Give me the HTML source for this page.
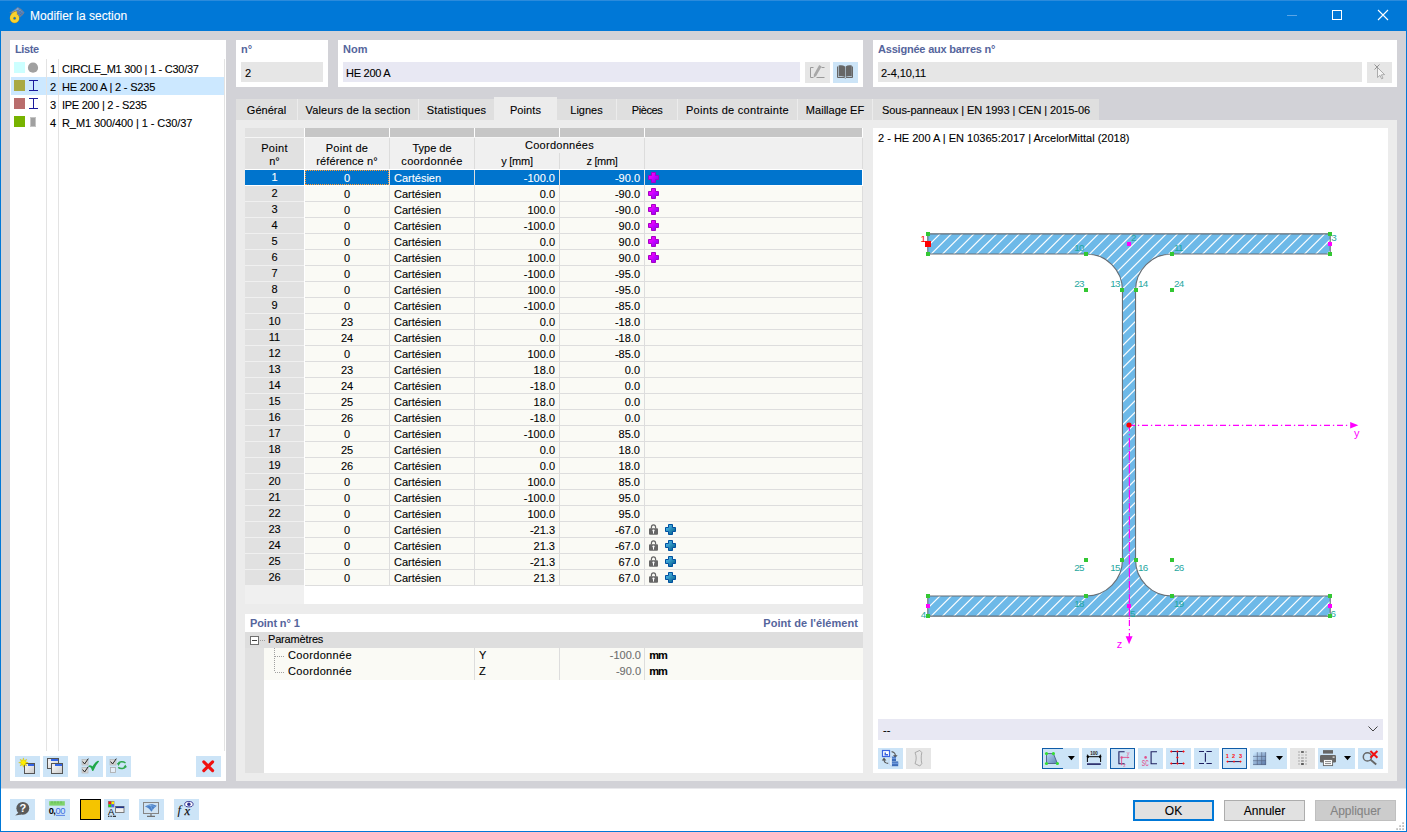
<!DOCTYPE html>
<html lang="fr"><head><meta charset="utf-8"><title>Modifier la section</title>
<style>
html,body{margin:0;padding:0;}
body{width:1407px;height:832px;overflow:hidden;position:relative;background:#D2D2D7;font-family:"Liberation Sans", sans-serif;font-size:11px;color:#000;}
.b{position:absolute;box-sizing:border-box;}
.t{position:absolute;white-space:pre;-webkit-text-stroke:0.1px currentColor;}
svg{position:absolute;overflow:visible;}
.lbl{color:#55659C;font-weight:700;-webkit-text-stroke:0;}
</style></head><body>
<div class="b " style="left:0px;top:0px;width:1407px;height:31px;background:#0078D7;"></div>
<div class="b " style="left:0px;top:0px;width:1407px;height:1px;background:#2B8BDC;"></div>
<div class="b " style="left:0px;top:31px;width:1px;height:801px;background:#0078D7;"></div>
<div class="b " style="left:1406px;top:31px;width:1px;height:801px;background:#0078D7;"></div>
<div class="b " style="left:0px;top:831px;width:1407px;height:1px;background:#0078D7;"></div>
<div class="b " style="left:1px;top:788px;width:1405px;height:43px;background:#FFFFFF;"></div>
<div class="b " style="left:1px;top:788px;width:1405px;height:1px;background:#E9E9EC;"></div>
<div class="t " style="top:7.5px;height:16px;line-height:16px;left:30px;font-size:12px;color:#fff;letter-spacing:0.025px;">Modifier la section</div>
<div class="b " style="left:10px;top:40px;width:216px;height:741px;background:#fff;"></div>
<div class="t lbl" style="top:41px;height:16px;line-height:16px;left:15px;font-weight:700;letter-spacing:-0.398px;">Liste</div>
<div class="b " style="left:11px;top:77px;width:213px;height:18px;background:#CCE8FF;"></div>
<div class="b " style="left:46px;top:59px;width:1px;height:692px;background:#E3E3E3;"></div>
<div class="b " style="left:58px;top:59px;width:1px;height:692px;background:#E3E3E3;"></div>
<div class="b " style="left:224px;top:59px;width:1px;height:692px;background:#E3E3E3;"></div>
<div class="b " style="left:14px;top:62px;width:11px;height:11px;background:#CCFFFF;"></div>
<div class="t " style="top:60.5px;height:16px;line-height:16px;left:50px;">1</div>
<div class="t " style="top:60.5px;height:16px;line-height:16px;left:62px;letter-spacing:-0.261px;">CIRCLE_M1 300 | 1 - C30/37</div>
<div class="b " style="left:14px;top:80px;width:11px;height:11px;background:#A9A944;"></div>
<div class="t " style="top:78.5px;height:16px;line-height:16px;left:50px;">2</div>
<div class="t " style="top:78.5px;height:16px;line-height:16px;left:62px;letter-spacing:-0.170px;">HE 200 A | 2 - S235</div>
<div class="b " style="left:14px;top:98px;width:11px;height:11px;background:#B96D6D;"></div>
<div class="t " style="top:96.5px;height:16px;line-height:16px;left:50px;">3</div>
<div class="t " style="top:96.5px;height:16px;line-height:16px;left:62px;letter-spacing:-0.284px;">IPE 200 | 2 - S235</div>
<div class="b " style="left:14px;top:116px;width:11px;height:11px;background:#77B300;"></div>
<div class="t " style="top:114.5px;height:16px;line-height:16px;left:50px;">4</div>
<div class="t " style="top:114.5px;height:16px;line-height:16px;left:62px;letter-spacing:-0.088px;">R_M1 300/400 | 1 - C30/37</div>
<div class="b " style="left:15px;top:756px;width:25px;height:21px;background:#CCE4F7;"></div>
<div class="b " style="left:43px;top:756px;width:25px;height:21px;background:#CCE4F7;"></div>
<div class="b " style="left:78px;top:756px;width:25px;height:21px;background:#CCE4F7;"></div>
<div class="b " style="left:106px;top:756px;width:25px;height:21px;background:#CCE4F7;"></div>
<div class="b " style="left:196px;top:756px;width:25px;height:21px;background:#CCE4F7;"></div>
<div class="b " style="left:236px;top:40px;width:92px;height:47px;background:#fff;"></div>
<div class="t lbl" style="top:41px;height:16px;line-height:16px;left:241px;font-weight:700;">n°</div>
<div class="b " style="left:241px;top:62px;width:82px;height:20px;background:#E6E6E6;"></div>
<div class="t " style="top:65px;height:16px;line-height:16px;left:245px;">2</div>
<div class="b " style="left:338px;top:40px;width:525px;height:47px;background:#fff;"></div>
<div class="t lbl" style="top:41px;height:16px;line-height:16px;left:343px;font-weight:700;">Nom</div>
<div class="b " style="left:343px;top:62px;width:457px;height:20px;background:#E8E8F3;"></div>
<div class="t " style="top:65px;height:16px;line-height:16px;left:346px;letter-spacing:-0.261px;">HE 200 A</div>
<div class="b " style="left:805px;top:62px;width:25px;height:21px;background:#E6E6E6;"></div>
<div class="b " style="left:833px;top:62px;width:25px;height:21px;background:#CCE4F7;"></div>
<div class="b " style="left:873px;top:40px;width:524px;height:47px;background:#fff;"></div>
<div class="t lbl" style="top:41px;height:16px;line-height:16px;left:878px;font-weight:700;letter-spacing:-0.204px;">Assignée aux barres n°</div>
<div class="b " style="left:878px;top:62px;width:484px;height:20px;background:#E6E6E6;"></div>
<div class="t " style="top:65px;height:16px;line-height:16px;left:881px;letter-spacing:-0.075px;">2-4,10,11</div>
<div class="b " style="left:1367px;top:62px;width:25px;height:21px;background:#E6E6E6;"></div>
<div class="b " style="left:236px;top:99px;width:863px;height:21px;background:#ECECEC;"></div>
<div class="b " style="left:236px;top:99px;width:61px;height:21px;background:#DFDFDF;"></div>
<div class="t " style="top:102px;height:16px;line-height:16px;left:116.5px;width:300px;text-align:center;letter-spacing:0.023px;">Général</div>
<div class="b " style="left:298px;top:99px;width:120px;height:21px;background:#DFDFDF;"></div>
<div class="t " style="top:102px;height:16px;line-height:16px;left:208.0px;width:300px;text-align:center;letter-spacing:0.176px;">Valeurs de la section</div>
<div class="b " style="left:419px;top:99px;width:75px;height:21px;background:#DFDFDF;"></div>
<div class="t " style="top:102px;height:16px;line-height:16px;left:306.5px;width:300px;text-align:center;letter-spacing:0.219px;">Statistiques</div>
<div class="b " style="left:494px;top:97px;width:63px;height:23px;background:#ECECEC;"></div>
<div class="t " style="top:102px;height:16px;line-height:16px;left:375.5px;width:300px;text-align:center;letter-spacing:0.112px;">Points</div>
<div class="b " style="left:557px;top:99px;width:59px;height:21px;background:#DFDFDF;"></div>
<div class="t " style="top:102px;height:16px;line-height:16px;left:436.5px;width:300px;text-align:center;">Lignes</div>
<div class="b " style="left:617px;top:99px;width:60px;height:21px;background:#DFDFDF;"></div>
<div class="t " style="top:102px;height:16px;line-height:16px;left:497.0px;width:300px;text-align:center;letter-spacing:-0.422px;">Pièces</div>
<div class="b " style="left:678px;top:99px;width:119px;height:21px;background:#DFDFDF;"></div>
<div class="t " style="top:102px;height:16px;line-height:16px;left:587.5px;width:300px;text-align:center;letter-spacing:0.288px;">Points de contrainte</div>
<div class="b " style="left:798px;top:99px;width:74px;height:21px;background:#DFDFDF;"></div>
<div class="t " style="top:102px;height:16px;line-height:16px;left:685.0px;width:300px;text-align:center;letter-spacing:0.016px;">Maillage EF</div>
<div class="b " style="left:873px;top:99px;width:226px;height:21px;background:#DFDFDF;"></div>
<div class="t " style="top:102px;height:16px;line-height:16px;left:836.0px;width:300px;text-align:center;letter-spacing:-0.061px;">Sous-panneaux | EN 1993 | CEN | 2015-06</div>
<div class="b " style="left:236px;top:120px;width:1161px;height:661px;background:#ECECEC;"></div>
<div class="b " style="left:245px;top:128px;width:618px;height:476px;background:#fff;"></div>
<div class="b " style="left:245px;top:128px;width:59px;height:9px;background:#E1E1E1;"></div>
<div class="b " style="left:245px;top:137px;width:618px;height:1px;background:#F6F6F6;"></div>
<div class="b " style="left:305px;top:128px;width:84px;height:9px;background:#C6C6C6;"></div>
<div class="b " style="left:390px;top:128px;width:84px;height:9px;background:#C6C6C6;"></div>
<div class="b " style="left:475px;top:128px;width:84px;height:9px;background:#C6C6C6;"></div>
<div class="b " style="left:560px;top:128px;width:84px;height:9px;background:#C6C6C6;"></div>
<div class="b " style="left:645px;top:128px;width:217px;height:9px;background:#C6C6C6;"></div>
<div class="b " style="left:245px;top:138px;width:59px;height:31px;background:#E1E1E1;"></div>
<div class="b " style="left:305px;top:138px;width:557px;height:31px;background:#F0F0F0;"></div>
<div class="b " style="left:389px;top:138px;width:1px;height:31px;background:#DCDCDC;"></div>
<div class="b " style="left:474px;top:138px;width:1px;height:31px;background:#DCDCDC;"></div>
<div class="b " style="left:644px;top:138px;width:1px;height:31px;background:#DCDCDC;"></div>
<div class="b " style="left:862px;top:138px;width:1px;height:31px;background:#DCDCDC;"></div>
<div class="b " style="left:559px;top:153px;width:1px;height:16px;background:#DCDCDC;"></div>
<div class="t " style="top:140px;height:16px;line-height:16px;left:124.5px;width:300px;text-align:center;letter-spacing:0.304px;">Point</div>
<div class="t " style="top:153px;height:16px;line-height:16px;left:124.5px;width:300px;text-align:center;">n°</div>
<div class="t " style="top:140px;height:16px;line-height:16px;left:197px;width:300px;text-align:center;letter-spacing:0.266px;">Point de</div>
<div class="t " style="top:153px;height:16px;line-height:16px;left:197px;width:300px;text-align:center;letter-spacing:0.129px;">référence n°</div>
<div class="t " style="top:140px;height:16px;line-height:16px;left:282px;width:300px;text-align:center;">Type de</div>
<div class="t " style="top:153px;height:16px;line-height:16px;left:282px;width:300px;text-align:center;letter-spacing:0.319px;">coordonnée</div>
<div class="t " style="top:137px;height:16px;line-height:16px;left:409.5px;width:300px;text-align:center;letter-spacing:0.267px;">Coordonnées</div>
<div class="t " style="top:153px;height:16px;line-height:16px;left:367px;width:300px;text-align:center;letter-spacing:-0.208px;">y [mm]</div>
<div class="t " style="top:153px;height:16px;line-height:16px;left:452px;width:300px;text-align:center;letter-spacing:-0.333px;">z [mm]</div>
<div class="b " style="left:245px;top:170px;width:59px;height:15px;background:#0074CD;"></div>
<div class="b " style="left:305px;top:170px;width:84px;height:15px;background:#0074CD;outline:1px dotted #FF9A30;outline-offset:-1px;"></div>
<div class="b " style="left:390px;top:170px;width:84px;height:15px;background:#0074CD;"></div>
<div class="b " style="left:475px;top:170px;width:84px;height:15px;background:#0074CD;"></div>
<div class="b " style="left:560px;top:170px;width:84px;height:15px;background:#0074CD;"></div>
<div class="b " style="left:645px;top:170px;width:217px;height:15px;background:#0074CD;"></div>
<div class="b " style="left:389px;top:170px;width:1px;height:16px;background:#DDDDDD;"></div>
<div class="b " style="left:474px;top:170px;width:1px;height:16px;background:#DDDDDD;"></div>
<div class="b " style="left:559px;top:170px;width:1px;height:16px;background:#DDDDDD;"></div>
<div class="b " style="left:644px;top:170px;width:1px;height:16px;background:#DDDDDD;"></div>
<div class="t " style="top:168.9px;height:16px;line-height:16px;left:124.5px;width:300px;text-align:center;color:#fff;">1</div>
<div class="t " style="top:169.5px;height:16px;line-height:16px;left:197px;width:300px;text-align:center;color:#fff;">0</div>
<div class="t " style="top:169.5px;height:16px;line-height:16px;left:394px;color:#fff;">Cartésien</div>
<div class="t " style="top:169.5px;height:16px;line-height:16px;right:852px;color:#fff;">-100.0</div>
<div class="t " style="top:169.5px;height:16px;line-height:16px;right:767px;color:#fff;">-90.0</div>
<div class="b " style="left:245px;top:186px;width:59px;height:15px;background:#E1E1E1;"></div>
<div class="b " style="left:305px;top:186px;width:557px;height:15px;background:#FAFAF5;"></div>
<div class="b " style="left:245px;top:201px;width:59px;height:1px;background:#F0F0F0;"></div>
<div class="b " style="left:305px;top:201px;width:558px;height:1px;background:#DDDDDD;"></div>
<div class="b " style="left:389px;top:186px;width:1px;height:16px;background:#DDDDDD;"></div>
<div class="b " style="left:474px;top:186px;width:1px;height:16px;background:#DDDDDD;"></div>
<div class="b " style="left:559px;top:186px;width:1px;height:16px;background:#DDDDDD;"></div>
<div class="b " style="left:644px;top:186px;width:1px;height:16px;background:#DDDDDD;"></div>
<div class="b " style="left:862px;top:186px;width:1px;height:16px;background:#DDDDDD;"></div>
<div class="t " style="top:184.9px;height:16px;line-height:16px;left:124.5px;width:300px;text-align:center;">2</div>
<div class="t " style="top:185.5px;height:16px;line-height:16px;left:197px;width:300px;text-align:center;">0</div>
<div class="t " style="top:185.5px;height:16px;line-height:16px;left:394px;">Cartésien</div>
<div class="t " style="top:185.5px;height:16px;line-height:16px;right:852px;">0.0</div>
<div class="t " style="top:185.5px;height:16px;line-height:16px;right:767px;">-90.0</div>
<div class="b " style="left:245px;top:202px;width:59px;height:15px;background:#E1E1E1;"></div>
<div class="b " style="left:305px;top:202px;width:557px;height:15px;background:#FAFAF5;"></div>
<div class="b " style="left:245px;top:217px;width:59px;height:1px;background:#F0F0F0;"></div>
<div class="b " style="left:305px;top:217px;width:558px;height:1px;background:#DDDDDD;"></div>
<div class="b " style="left:389px;top:202px;width:1px;height:16px;background:#DDDDDD;"></div>
<div class="b " style="left:474px;top:202px;width:1px;height:16px;background:#DDDDDD;"></div>
<div class="b " style="left:559px;top:202px;width:1px;height:16px;background:#DDDDDD;"></div>
<div class="b " style="left:644px;top:202px;width:1px;height:16px;background:#DDDDDD;"></div>
<div class="b " style="left:862px;top:202px;width:1px;height:16px;background:#DDDDDD;"></div>
<div class="t " style="top:200.9px;height:16px;line-height:16px;left:124.5px;width:300px;text-align:center;">3</div>
<div class="t " style="top:201.5px;height:16px;line-height:16px;left:197px;width:300px;text-align:center;">0</div>
<div class="t " style="top:201.5px;height:16px;line-height:16px;left:394px;">Cartésien</div>
<div class="t " style="top:201.5px;height:16px;line-height:16px;right:852px;">100.0</div>
<div class="t " style="top:201.5px;height:16px;line-height:16px;right:767px;">-90.0</div>
<div class="b " style="left:245px;top:218px;width:59px;height:15px;background:#E1E1E1;"></div>
<div class="b " style="left:305px;top:218px;width:557px;height:15px;background:#FAFAF5;"></div>
<div class="b " style="left:245px;top:233px;width:59px;height:1px;background:#F0F0F0;"></div>
<div class="b " style="left:305px;top:233px;width:558px;height:1px;background:#DDDDDD;"></div>
<div class="b " style="left:389px;top:218px;width:1px;height:16px;background:#DDDDDD;"></div>
<div class="b " style="left:474px;top:218px;width:1px;height:16px;background:#DDDDDD;"></div>
<div class="b " style="left:559px;top:218px;width:1px;height:16px;background:#DDDDDD;"></div>
<div class="b " style="left:644px;top:218px;width:1px;height:16px;background:#DDDDDD;"></div>
<div class="b " style="left:862px;top:218px;width:1px;height:16px;background:#DDDDDD;"></div>
<div class="t " style="top:216.9px;height:16px;line-height:16px;left:124.5px;width:300px;text-align:center;">4</div>
<div class="t " style="top:217.5px;height:16px;line-height:16px;left:197px;width:300px;text-align:center;">0</div>
<div class="t " style="top:217.5px;height:16px;line-height:16px;left:394px;">Cartésien</div>
<div class="t " style="top:217.5px;height:16px;line-height:16px;right:852px;">-100.0</div>
<div class="t " style="top:217.5px;height:16px;line-height:16px;right:767px;">90.0</div>
<div class="b " style="left:245px;top:234px;width:59px;height:15px;background:#E1E1E1;"></div>
<div class="b " style="left:305px;top:234px;width:557px;height:15px;background:#FAFAF5;"></div>
<div class="b " style="left:245px;top:249px;width:59px;height:1px;background:#F0F0F0;"></div>
<div class="b " style="left:305px;top:249px;width:558px;height:1px;background:#DDDDDD;"></div>
<div class="b " style="left:389px;top:234px;width:1px;height:16px;background:#DDDDDD;"></div>
<div class="b " style="left:474px;top:234px;width:1px;height:16px;background:#DDDDDD;"></div>
<div class="b " style="left:559px;top:234px;width:1px;height:16px;background:#DDDDDD;"></div>
<div class="b " style="left:644px;top:234px;width:1px;height:16px;background:#DDDDDD;"></div>
<div class="b " style="left:862px;top:234px;width:1px;height:16px;background:#DDDDDD;"></div>
<div class="t " style="top:232.9px;height:16px;line-height:16px;left:124.5px;width:300px;text-align:center;">5</div>
<div class="t " style="top:233.5px;height:16px;line-height:16px;left:197px;width:300px;text-align:center;">0</div>
<div class="t " style="top:233.5px;height:16px;line-height:16px;left:394px;">Cartésien</div>
<div class="t " style="top:233.5px;height:16px;line-height:16px;right:852px;">0.0</div>
<div class="t " style="top:233.5px;height:16px;line-height:16px;right:767px;">90.0</div>
<div class="b " style="left:245px;top:250px;width:59px;height:15px;background:#E1E1E1;"></div>
<div class="b " style="left:305px;top:250px;width:557px;height:15px;background:#FAFAF5;"></div>
<div class="b " style="left:245px;top:265px;width:59px;height:1px;background:#F0F0F0;"></div>
<div class="b " style="left:305px;top:265px;width:558px;height:1px;background:#DDDDDD;"></div>
<div class="b " style="left:389px;top:250px;width:1px;height:16px;background:#DDDDDD;"></div>
<div class="b " style="left:474px;top:250px;width:1px;height:16px;background:#DDDDDD;"></div>
<div class="b " style="left:559px;top:250px;width:1px;height:16px;background:#DDDDDD;"></div>
<div class="b " style="left:644px;top:250px;width:1px;height:16px;background:#DDDDDD;"></div>
<div class="b " style="left:862px;top:250px;width:1px;height:16px;background:#DDDDDD;"></div>
<div class="t " style="top:248.89999999999998px;height:16px;line-height:16px;left:124.5px;width:300px;text-align:center;">6</div>
<div class="t " style="top:249.5px;height:16px;line-height:16px;left:197px;width:300px;text-align:center;">0</div>
<div class="t " style="top:249.5px;height:16px;line-height:16px;left:394px;">Cartésien</div>
<div class="t " style="top:249.5px;height:16px;line-height:16px;right:852px;">100.0</div>
<div class="t " style="top:249.5px;height:16px;line-height:16px;right:767px;">90.0</div>
<div class="b " style="left:245px;top:266px;width:59px;height:15px;background:#E1E1E1;"></div>
<div class="b " style="left:305px;top:266px;width:557px;height:15px;background:#FAFAF5;"></div>
<div class="b " style="left:245px;top:281px;width:59px;height:1px;background:#F0F0F0;"></div>
<div class="b " style="left:305px;top:281px;width:558px;height:1px;background:#DDDDDD;"></div>
<div class="b " style="left:389px;top:266px;width:1px;height:16px;background:#DDDDDD;"></div>
<div class="b " style="left:474px;top:266px;width:1px;height:16px;background:#DDDDDD;"></div>
<div class="b " style="left:559px;top:266px;width:1px;height:16px;background:#DDDDDD;"></div>
<div class="b " style="left:644px;top:266px;width:1px;height:16px;background:#DDDDDD;"></div>
<div class="b " style="left:862px;top:266px;width:1px;height:16px;background:#DDDDDD;"></div>
<div class="t " style="top:264.9px;height:16px;line-height:16px;left:124.5px;width:300px;text-align:center;">7</div>
<div class="t " style="top:265.5px;height:16px;line-height:16px;left:197px;width:300px;text-align:center;">0</div>
<div class="t " style="top:265.5px;height:16px;line-height:16px;left:394px;">Cartésien</div>
<div class="t " style="top:265.5px;height:16px;line-height:16px;right:852px;">-100.0</div>
<div class="t " style="top:265.5px;height:16px;line-height:16px;right:767px;">-95.0</div>
<div class="b " style="left:245px;top:282px;width:59px;height:15px;background:#E1E1E1;"></div>
<div class="b " style="left:305px;top:282px;width:557px;height:15px;background:#FAFAF5;"></div>
<div class="b " style="left:245px;top:297px;width:59px;height:1px;background:#F0F0F0;"></div>
<div class="b " style="left:305px;top:297px;width:558px;height:1px;background:#DDDDDD;"></div>
<div class="b " style="left:389px;top:282px;width:1px;height:16px;background:#DDDDDD;"></div>
<div class="b " style="left:474px;top:282px;width:1px;height:16px;background:#DDDDDD;"></div>
<div class="b " style="left:559px;top:282px;width:1px;height:16px;background:#DDDDDD;"></div>
<div class="b " style="left:644px;top:282px;width:1px;height:16px;background:#DDDDDD;"></div>
<div class="b " style="left:862px;top:282px;width:1px;height:16px;background:#DDDDDD;"></div>
<div class="t " style="top:280.9px;height:16px;line-height:16px;left:124.5px;width:300px;text-align:center;">8</div>
<div class="t " style="top:281.5px;height:16px;line-height:16px;left:197px;width:300px;text-align:center;">0</div>
<div class="t " style="top:281.5px;height:16px;line-height:16px;left:394px;">Cartésien</div>
<div class="t " style="top:281.5px;height:16px;line-height:16px;right:852px;">100.0</div>
<div class="t " style="top:281.5px;height:16px;line-height:16px;right:767px;">-95.0</div>
<div class="b " style="left:245px;top:298px;width:59px;height:15px;background:#E1E1E1;"></div>
<div class="b " style="left:305px;top:298px;width:557px;height:15px;background:#FAFAF5;"></div>
<div class="b " style="left:245px;top:313px;width:59px;height:1px;background:#F0F0F0;"></div>
<div class="b " style="left:305px;top:313px;width:558px;height:1px;background:#DDDDDD;"></div>
<div class="b " style="left:389px;top:298px;width:1px;height:16px;background:#DDDDDD;"></div>
<div class="b " style="left:474px;top:298px;width:1px;height:16px;background:#DDDDDD;"></div>
<div class="b " style="left:559px;top:298px;width:1px;height:16px;background:#DDDDDD;"></div>
<div class="b " style="left:644px;top:298px;width:1px;height:16px;background:#DDDDDD;"></div>
<div class="b " style="left:862px;top:298px;width:1px;height:16px;background:#DDDDDD;"></div>
<div class="t " style="top:296.9px;height:16px;line-height:16px;left:124.5px;width:300px;text-align:center;">9</div>
<div class="t " style="top:297.5px;height:16px;line-height:16px;left:197px;width:300px;text-align:center;">0</div>
<div class="t " style="top:297.5px;height:16px;line-height:16px;left:394px;">Cartésien</div>
<div class="t " style="top:297.5px;height:16px;line-height:16px;right:852px;">-100.0</div>
<div class="t " style="top:297.5px;height:16px;line-height:16px;right:767px;">-85.0</div>
<div class="b " style="left:245px;top:314px;width:59px;height:15px;background:#E1E1E1;"></div>
<div class="b " style="left:305px;top:314px;width:557px;height:15px;background:#FAFAF5;"></div>
<div class="b " style="left:245px;top:329px;width:59px;height:1px;background:#F0F0F0;"></div>
<div class="b " style="left:305px;top:329px;width:558px;height:1px;background:#DDDDDD;"></div>
<div class="b " style="left:389px;top:314px;width:1px;height:16px;background:#DDDDDD;"></div>
<div class="b " style="left:474px;top:314px;width:1px;height:16px;background:#DDDDDD;"></div>
<div class="b " style="left:559px;top:314px;width:1px;height:16px;background:#DDDDDD;"></div>
<div class="b " style="left:644px;top:314px;width:1px;height:16px;background:#DDDDDD;"></div>
<div class="b " style="left:862px;top:314px;width:1px;height:16px;background:#DDDDDD;"></div>
<div class="t " style="top:312.9px;height:16px;line-height:16px;left:124.5px;width:300px;text-align:center;">10</div>
<div class="t " style="top:313.5px;height:16px;line-height:16px;left:197px;width:300px;text-align:center;">23</div>
<div class="t " style="top:313.5px;height:16px;line-height:16px;left:394px;">Cartésien</div>
<div class="t " style="top:313.5px;height:16px;line-height:16px;right:852px;">0.0</div>
<div class="t " style="top:313.5px;height:16px;line-height:16px;right:767px;">-18.0</div>
<div class="b " style="left:245px;top:330px;width:59px;height:15px;background:#E1E1E1;"></div>
<div class="b " style="left:305px;top:330px;width:557px;height:15px;background:#FAFAF5;"></div>
<div class="b " style="left:245px;top:345px;width:59px;height:1px;background:#F0F0F0;"></div>
<div class="b " style="left:305px;top:345px;width:558px;height:1px;background:#DDDDDD;"></div>
<div class="b " style="left:389px;top:330px;width:1px;height:16px;background:#DDDDDD;"></div>
<div class="b " style="left:474px;top:330px;width:1px;height:16px;background:#DDDDDD;"></div>
<div class="b " style="left:559px;top:330px;width:1px;height:16px;background:#DDDDDD;"></div>
<div class="b " style="left:644px;top:330px;width:1px;height:16px;background:#DDDDDD;"></div>
<div class="b " style="left:862px;top:330px;width:1px;height:16px;background:#DDDDDD;"></div>
<div class="t " style="top:328.9px;height:16px;line-height:16px;left:124.5px;width:300px;text-align:center;">11</div>
<div class="t " style="top:329.5px;height:16px;line-height:16px;left:197px;width:300px;text-align:center;">24</div>
<div class="t " style="top:329.5px;height:16px;line-height:16px;left:394px;">Cartésien</div>
<div class="t " style="top:329.5px;height:16px;line-height:16px;right:852px;">0.0</div>
<div class="t " style="top:329.5px;height:16px;line-height:16px;right:767px;">-18.0</div>
<div class="b " style="left:245px;top:346px;width:59px;height:15px;background:#E1E1E1;"></div>
<div class="b " style="left:305px;top:346px;width:557px;height:15px;background:#FAFAF5;"></div>
<div class="b " style="left:245px;top:361px;width:59px;height:1px;background:#F0F0F0;"></div>
<div class="b " style="left:305px;top:361px;width:558px;height:1px;background:#DDDDDD;"></div>
<div class="b " style="left:389px;top:346px;width:1px;height:16px;background:#DDDDDD;"></div>
<div class="b " style="left:474px;top:346px;width:1px;height:16px;background:#DDDDDD;"></div>
<div class="b " style="left:559px;top:346px;width:1px;height:16px;background:#DDDDDD;"></div>
<div class="b " style="left:644px;top:346px;width:1px;height:16px;background:#DDDDDD;"></div>
<div class="b " style="left:862px;top:346px;width:1px;height:16px;background:#DDDDDD;"></div>
<div class="t " style="top:344.9px;height:16px;line-height:16px;left:124.5px;width:300px;text-align:center;">12</div>
<div class="t " style="top:345.5px;height:16px;line-height:16px;left:197px;width:300px;text-align:center;">0</div>
<div class="t " style="top:345.5px;height:16px;line-height:16px;left:394px;">Cartésien</div>
<div class="t " style="top:345.5px;height:16px;line-height:16px;right:852px;">100.0</div>
<div class="t " style="top:345.5px;height:16px;line-height:16px;right:767px;">-85.0</div>
<div class="b " style="left:245px;top:362px;width:59px;height:15px;background:#E1E1E1;"></div>
<div class="b " style="left:305px;top:362px;width:557px;height:15px;background:#FAFAF5;"></div>
<div class="b " style="left:245px;top:377px;width:59px;height:1px;background:#F0F0F0;"></div>
<div class="b " style="left:305px;top:377px;width:558px;height:1px;background:#DDDDDD;"></div>
<div class="b " style="left:389px;top:362px;width:1px;height:16px;background:#DDDDDD;"></div>
<div class="b " style="left:474px;top:362px;width:1px;height:16px;background:#DDDDDD;"></div>
<div class="b " style="left:559px;top:362px;width:1px;height:16px;background:#DDDDDD;"></div>
<div class="b " style="left:644px;top:362px;width:1px;height:16px;background:#DDDDDD;"></div>
<div class="b " style="left:862px;top:362px;width:1px;height:16px;background:#DDDDDD;"></div>
<div class="t " style="top:360.9px;height:16px;line-height:16px;left:124.5px;width:300px;text-align:center;">13</div>
<div class="t " style="top:361.5px;height:16px;line-height:16px;left:197px;width:300px;text-align:center;">23</div>
<div class="t " style="top:361.5px;height:16px;line-height:16px;left:394px;">Cartésien</div>
<div class="t " style="top:361.5px;height:16px;line-height:16px;right:852px;">18.0</div>
<div class="t " style="top:361.5px;height:16px;line-height:16px;right:767px;">0.0</div>
<div class="b " style="left:245px;top:378px;width:59px;height:15px;background:#E1E1E1;"></div>
<div class="b " style="left:305px;top:378px;width:557px;height:15px;background:#FAFAF5;"></div>
<div class="b " style="left:245px;top:393px;width:59px;height:1px;background:#F0F0F0;"></div>
<div class="b " style="left:305px;top:393px;width:558px;height:1px;background:#DDDDDD;"></div>
<div class="b " style="left:389px;top:378px;width:1px;height:16px;background:#DDDDDD;"></div>
<div class="b " style="left:474px;top:378px;width:1px;height:16px;background:#DDDDDD;"></div>
<div class="b " style="left:559px;top:378px;width:1px;height:16px;background:#DDDDDD;"></div>
<div class="b " style="left:644px;top:378px;width:1px;height:16px;background:#DDDDDD;"></div>
<div class="b " style="left:862px;top:378px;width:1px;height:16px;background:#DDDDDD;"></div>
<div class="t " style="top:376.9px;height:16px;line-height:16px;left:124.5px;width:300px;text-align:center;">14</div>
<div class="t " style="top:377.5px;height:16px;line-height:16px;left:197px;width:300px;text-align:center;">24</div>
<div class="t " style="top:377.5px;height:16px;line-height:16px;left:394px;">Cartésien</div>
<div class="t " style="top:377.5px;height:16px;line-height:16px;right:852px;">-18.0</div>
<div class="t " style="top:377.5px;height:16px;line-height:16px;right:767px;">0.0</div>
<div class="b " style="left:245px;top:394px;width:59px;height:15px;background:#E1E1E1;"></div>
<div class="b " style="left:305px;top:394px;width:557px;height:15px;background:#FAFAF5;"></div>
<div class="b " style="left:245px;top:409px;width:59px;height:1px;background:#F0F0F0;"></div>
<div class="b " style="left:305px;top:409px;width:558px;height:1px;background:#DDDDDD;"></div>
<div class="b " style="left:389px;top:394px;width:1px;height:16px;background:#DDDDDD;"></div>
<div class="b " style="left:474px;top:394px;width:1px;height:16px;background:#DDDDDD;"></div>
<div class="b " style="left:559px;top:394px;width:1px;height:16px;background:#DDDDDD;"></div>
<div class="b " style="left:644px;top:394px;width:1px;height:16px;background:#DDDDDD;"></div>
<div class="b " style="left:862px;top:394px;width:1px;height:16px;background:#DDDDDD;"></div>
<div class="t " style="top:392.9px;height:16px;line-height:16px;left:124.5px;width:300px;text-align:center;">15</div>
<div class="t " style="top:393.5px;height:16px;line-height:16px;left:197px;width:300px;text-align:center;">25</div>
<div class="t " style="top:393.5px;height:16px;line-height:16px;left:394px;">Cartésien</div>
<div class="t " style="top:393.5px;height:16px;line-height:16px;right:852px;">18.0</div>
<div class="t " style="top:393.5px;height:16px;line-height:16px;right:767px;">0.0</div>
<div class="b " style="left:245px;top:410px;width:59px;height:15px;background:#E1E1E1;"></div>
<div class="b " style="left:305px;top:410px;width:557px;height:15px;background:#FAFAF5;"></div>
<div class="b " style="left:245px;top:425px;width:59px;height:1px;background:#F0F0F0;"></div>
<div class="b " style="left:305px;top:425px;width:558px;height:1px;background:#DDDDDD;"></div>
<div class="b " style="left:389px;top:410px;width:1px;height:16px;background:#DDDDDD;"></div>
<div class="b " style="left:474px;top:410px;width:1px;height:16px;background:#DDDDDD;"></div>
<div class="b " style="left:559px;top:410px;width:1px;height:16px;background:#DDDDDD;"></div>
<div class="b " style="left:644px;top:410px;width:1px;height:16px;background:#DDDDDD;"></div>
<div class="b " style="left:862px;top:410px;width:1px;height:16px;background:#DDDDDD;"></div>
<div class="t " style="top:408.9px;height:16px;line-height:16px;left:124.5px;width:300px;text-align:center;">16</div>
<div class="t " style="top:409.5px;height:16px;line-height:16px;left:197px;width:300px;text-align:center;">26</div>
<div class="t " style="top:409.5px;height:16px;line-height:16px;left:394px;">Cartésien</div>
<div class="t " style="top:409.5px;height:16px;line-height:16px;right:852px;">-18.0</div>
<div class="t " style="top:409.5px;height:16px;line-height:16px;right:767px;">0.0</div>
<div class="b " style="left:245px;top:426px;width:59px;height:15px;background:#E1E1E1;"></div>
<div class="b " style="left:305px;top:426px;width:557px;height:15px;background:#FAFAF5;"></div>
<div class="b " style="left:245px;top:441px;width:59px;height:1px;background:#F0F0F0;"></div>
<div class="b " style="left:305px;top:441px;width:558px;height:1px;background:#DDDDDD;"></div>
<div class="b " style="left:389px;top:426px;width:1px;height:16px;background:#DDDDDD;"></div>
<div class="b " style="left:474px;top:426px;width:1px;height:16px;background:#DDDDDD;"></div>
<div class="b " style="left:559px;top:426px;width:1px;height:16px;background:#DDDDDD;"></div>
<div class="b " style="left:644px;top:426px;width:1px;height:16px;background:#DDDDDD;"></div>
<div class="b " style="left:862px;top:426px;width:1px;height:16px;background:#DDDDDD;"></div>
<div class="t " style="top:424.9px;height:16px;line-height:16px;left:124.5px;width:300px;text-align:center;">17</div>
<div class="t " style="top:425.5px;height:16px;line-height:16px;left:197px;width:300px;text-align:center;">0</div>
<div class="t " style="top:425.5px;height:16px;line-height:16px;left:394px;">Cartésien</div>
<div class="t " style="top:425.5px;height:16px;line-height:16px;right:852px;">-100.0</div>
<div class="t " style="top:425.5px;height:16px;line-height:16px;right:767px;">85.0</div>
<div class="b " style="left:245px;top:442px;width:59px;height:15px;background:#E1E1E1;"></div>
<div class="b " style="left:305px;top:442px;width:557px;height:15px;background:#FAFAF5;"></div>
<div class="b " style="left:245px;top:457px;width:59px;height:1px;background:#F0F0F0;"></div>
<div class="b " style="left:305px;top:457px;width:558px;height:1px;background:#DDDDDD;"></div>
<div class="b " style="left:389px;top:442px;width:1px;height:16px;background:#DDDDDD;"></div>
<div class="b " style="left:474px;top:442px;width:1px;height:16px;background:#DDDDDD;"></div>
<div class="b " style="left:559px;top:442px;width:1px;height:16px;background:#DDDDDD;"></div>
<div class="b " style="left:644px;top:442px;width:1px;height:16px;background:#DDDDDD;"></div>
<div class="b " style="left:862px;top:442px;width:1px;height:16px;background:#DDDDDD;"></div>
<div class="t " style="top:440.9px;height:16px;line-height:16px;left:124.5px;width:300px;text-align:center;">18</div>
<div class="t " style="top:441.5px;height:16px;line-height:16px;left:197px;width:300px;text-align:center;">25</div>
<div class="t " style="top:441.5px;height:16px;line-height:16px;left:394px;">Cartésien</div>
<div class="t " style="top:441.5px;height:16px;line-height:16px;right:852px;">0.0</div>
<div class="t " style="top:441.5px;height:16px;line-height:16px;right:767px;">18.0</div>
<div class="b " style="left:245px;top:458px;width:59px;height:15px;background:#E1E1E1;"></div>
<div class="b " style="left:305px;top:458px;width:557px;height:15px;background:#FAFAF5;"></div>
<div class="b " style="left:245px;top:473px;width:59px;height:1px;background:#F0F0F0;"></div>
<div class="b " style="left:305px;top:473px;width:558px;height:1px;background:#DDDDDD;"></div>
<div class="b " style="left:389px;top:458px;width:1px;height:16px;background:#DDDDDD;"></div>
<div class="b " style="left:474px;top:458px;width:1px;height:16px;background:#DDDDDD;"></div>
<div class="b " style="left:559px;top:458px;width:1px;height:16px;background:#DDDDDD;"></div>
<div class="b " style="left:644px;top:458px;width:1px;height:16px;background:#DDDDDD;"></div>
<div class="b " style="left:862px;top:458px;width:1px;height:16px;background:#DDDDDD;"></div>
<div class="t " style="top:456.9px;height:16px;line-height:16px;left:124.5px;width:300px;text-align:center;">19</div>
<div class="t " style="top:457.5px;height:16px;line-height:16px;left:197px;width:300px;text-align:center;">26</div>
<div class="t " style="top:457.5px;height:16px;line-height:16px;left:394px;">Cartésien</div>
<div class="t " style="top:457.5px;height:16px;line-height:16px;right:852px;">0.0</div>
<div class="t " style="top:457.5px;height:16px;line-height:16px;right:767px;">18.0</div>
<div class="b " style="left:245px;top:474px;width:59px;height:15px;background:#E1E1E1;"></div>
<div class="b " style="left:305px;top:474px;width:557px;height:15px;background:#FAFAF5;"></div>
<div class="b " style="left:245px;top:489px;width:59px;height:1px;background:#F0F0F0;"></div>
<div class="b " style="left:305px;top:489px;width:558px;height:1px;background:#DDDDDD;"></div>
<div class="b " style="left:389px;top:474px;width:1px;height:16px;background:#DDDDDD;"></div>
<div class="b " style="left:474px;top:474px;width:1px;height:16px;background:#DDDDDD;"></div>
<div class="b " style="left:559px;top:474px;width:1px;height:16px;background:#DDDDDD;"></div>
<div class="b " style="left:644px;top:474px;width:1px;height:16px;background:#DDDDDD;"></div>
<div class="b " style="left:862px;top:474px;width:1px;height:16px;background:#DDDDDD;"></div>
<div class="t " style="top:472.9px;height:16px;line-height:16px;left:124.5px;width:300px;text-align:center;">20</div>
<div class="t " style="top:473.5px;height:16px;line-height:16px;left:197px;width:300px;text-align:center;">0</div>
<div class="t " style="top:473.5px;height:16px;line-height:16px;left:394px;">Cartésien</div>
<div class="t " style="top:473.5px;height:16px;line-height:16px;right:852px;">100.0</div>
<div class="t " style="top:473.5px;height:16px;line-height:16px;right:767px;">85.0</div>
<div class="b " style="left:245px;top:490px;width:59px;height:15px;background:#E1E1E1;"></div>
<div class="b " style="left:305px;top:490px;width:557px;height:15px;background:#FAFAF5;"></div>
<div class="b " style="left:245px;top:505px;width:59px;height:1px;background:#F0F0F0;"></div>
<div class="b " style="left:305px;top:505px;width:558px;height:1px;background:#DDDDDD;"></div>
<div class="b " style="left:389px;top:490px;width:1px;height:16px;background:#DDDDDD;"></div>
<div class="b " style="left:474px;top:490px;width:1px;height:16px;background:#DDDDDD;"></div>
<div class="b " style="left:559px;top:490px;width:1px;height:16px;background:#DDDDDD;"></div>
<div class="b " style="left:644px;top:490px;width:1px;height:16px;background:#DDDDDD;"></div>
<div class="b " style="left:862px;top:490px;width:1px;height:16px;background:#DDDDDD;"></div>
<div class="t " style="top:488.9px;height:16px;line-height:16px;left:124.5px;width:300px;text-align:center;">21</div>
<div class="t " style="top:489.5px;height:16px;line-height:16px;left:197px;width:300px;text-align:center;">0</div>
<div class="t " style="top:489.5px;height:16px;line-height:16px;left:394px;">Cartésien</div>
<div class="t " style="top:489.5px;height:16px;line-height:16px;right:852px;">-100.0</div>
<div class="t " style="top:489.5px;height:16px;line-height:16px;right:767px;">95.0</div>
<div class="b " style="left:245px;top:506px;width:59px;height:15px;background:#E1E1E1;"></div>
<div class="b " style="left:305px;top:506px;width:557px;height:15px;background:#FAFAF5;"></div>
<div class="b " style="left:245px;top:521px;width:59px;height:1px;background:#F0F0F0;"></div>
<div class="b " style="left:305px;top:521px;width:558px;height:1px;background:#DDDDDD;"></div>
<div class="b " style="left:389px;top:506px;width:1px;height:16px;background:#DDDDDD;"></div>
<div class="b " style="left:474px;top:506px;width:1px;height:16px;background:#DDDDDD;"></div>
<div class="b " style="left:559px;top:506px;width:1px;height:16px;background:#DDDDDD;"></div>
<div class="b " style="left:644px;top:506px;width:1px;height:16px;background:#DDDDDD;"></div>
<div class="b " style="left:862px;top:506px;width:1px;height:16px;background:#DDDDDD;"></div>
<div class="t " style="top:504.9px;height:16px;line-height:16px;left:124.5px;width:300px;text-align:center;">22</div>
<div class="t " style="top:505.5px;height:16px;line-height:16px;left:197px;width:300px;text-align:center;">0</div>
<div class="t " style="top:505.5px;height:16px;line-height:16px;left:394px;">Cartésien</div>
<div class="t " style="top:505.5px;height:16px;line-height:16px;right:852px;">100.0</div>
<div class="t " style="top:505.5px;height:16px;line-height:16px;right:767px;">95.0</div>
<div class="b " style="left:245px;top:522px;width:59px;height:15px;background:#E1E1E1;"></div>
<div class="b " style="left:305px;top:522px;width:557px;height:15px;background:#FAFAF5;"></div>
<div class="b " style="left:245px;top:537px;width:59px;height:1px;background:#F0F0F0;"></div>
<div class="b " style="left:305px;top:537px;width:558px;height:1px;background:#DDDDDD;"></div>
<div class="b " style="left:389px;top:522px;width:1px;height:16px;background:#DDDDDD;"></div>
<div class="b " style="left:474px;top:522px;width:1px;height:16px;background:#DDDDDD;"></div>
<div class="b " style="left:559px;top:522px;width:1px;height:16px;background:#DDDDDD;"></div>
<div class="b " style="left:644px;top:522px;width:1px;height:16px;background:#DDDDDD;"></div>
<div class="b " style="left:862px;top:522px;width:1px;height:16px;background:#DDDDDD;"></div>
<div class="t " style="top:520.9px;height:16px;line-height:16px;left:124.5px;width:300px;text-align:center;">23</div>
<div class="t " style="top:521.5px;height:16px;line-height:16px;left:197px;width:300px;text-align:center;">0</div>
<div class="t " style="top:521.5px;height:16px;line-height:16px;left:394px;">Cartésien</div>
<div class="t " style="top:521.5px;height:16px;line-height:16px;right:852px;">-21.3</div>
<div class="t " style="top:521.5px;height:16px;line-height:16px;right:767px;">-67.0</div>
<div class="b " style="left:245px;top:538px;width:59px;height:15px;background:#E1E1E1;"></div>
<div class="b " style="left:305px;top:538px;width:557px;height:15px;background:#FAFAF5;"></div>
<div class="b " style="left:245px;top:553px;width:59px;height:1px;background:#F0F0F0;"></div>
<div class="b " style="left:305px;top:553px;width:558px;height:1px;background:#DDDDDD;"></div>
<div class="b " style="left:389px;top:538px;width:1px;height:16px;background:#DDDDDD;"></div>
<div class="b " style="left:474px;top:538px;width:1px;height:16px;background:#DDDDDD;"></div>
<div class="b " style="left:559px;top:538px;width:1px;height:16px;background:#DDDDDD;"></div>
<div class="b " style="left:644px;top:538px;width:1px;height:16px;background:#DDDDDD;"></div>
<div class="b " style="left:862px;top:538px;width:1px;height:16px;background:#DDDDDD;"></div>
<div class="t " style="top:536.9px;height:16px;line-height:16px;left:124.5px;width:300px;text-align:center;">24</div>
<div class="t " style="top:537.5px;height:16px;line-height:16px;left:197px;width:300px;text-align:center;">0</div>
<div class="t " style="top:537.5px;height:16px;line-height:16px;left:394px;">Cartésien</div>
<div class="t " style="top:537.5px;height:16px;line-height:16px;right:852px;">21.3</div>
<div class="t " style="top:537.5px;height:16px;line-height:16px;right:767px;">-67.0</div>
<div class="b " style="left:245px;top:554px;width:59px;height:15px;background:#E1E1E1;"></div>
<div class="b " style="left:305px;top:554px;width:557px;height:15px;background:#FAFAF5;"></div>
<div class="b " style="left:245px;top:569px;width:59px;height:1px;background:#F0F0F0;"></div>
<div class="b " style="left:305px;top:569px;width:558px;height:1px;background:#DDDDDD;"></div>
<div class="b " style="left:389px;top:554px;width:1px;height:16px;background:#DDDDDD;"></div>
<div class="b " style="left:474px;top:554px;width:1px;height:16px;background:#DDDDDD;"></div>
<div class="b " style="left:559px;top:554px;width:1px;height:16px;background:#DDDDDD;"></div>
<div class="b " style="left:644px;top:554px;width:1px;height:16px;background:#DDDDDD;"></div>
<div class="b " style="left:862px;top:554px;width:1px;height:16px;background:#DDDDDD;"></div>
<div class="t " style="top:552.9px;height:16px;line-height:16px;left:124.5px;width:300px;text-align:center;">25</div>
<div class="t " style="top:553.5px;height:16px;line-height:16px;left:197px;width:300px;text-align:center;">0</div>
<div class="t " style="top:553.5px;height:16px;line-height:16px;left:394px;">Cartésien</div>
<div class="t " style="top:553.5px;height:16px;line-height:16px;right:852px;">-21.3</div>
<div class="t " style="top:553.5px;height:16px;line-height:16px;right:767px;">67.0</div>
<div class="b " style="left:245px;top:570px;width:59px;height:15px;background:#E1E1E1;"></div>
<div class="b " style="left:305px;top:570px;width:557px;height:15px;background:#FAFAF5;"></div>
<div class="b " style="left:245px;top:585px;width:59px;height:1px;background:#F0F0F0;"></div>
<div class="b " style="left:305px;top:585px;width:558px;height:1px;background:#DDDDDD;"></div>
<div class="b " style="left:389px;top:570px;width:1px;height:16px;background:#DDDDDD;"></div>
<div class="b " style="left:474px;top:570px;width:1px;height:16px;background:#DDDDDD;"></div>
<div class="b " style="left:559px;top:570px;width:1px;height:16px;background:#DDDDDD;"></div>
<div class="b " style="left:644px;top:570px;width:1px;height:16px;background:#DDDDDD;"></div>
<div class="b " style="left:862px;top:570px;width:1px;height:16px;background:#DDDDDD;"></div>
<div class="t " style="top:568.9px;height:16px;line-height:16px;left:124.5px;width:300px;text-align:center;">26</div>
<div class="t " style="top:569.5px;height:16px;line-height:16px;left:197px;width:300px;text-align:center;">0</div>
<div class="t " style="top:569.5px;height:16px;line-height:16px;left:394px;">Cartésien</div>
<div class="t " style="top:569.5px;height:16px;line-height:16px;right:852px;">21.3</div>
<div class="t " style="top:569.5px;height:16px;line-height:16px;right:767px;">67.0</div>
<div class="b " style="left:245px;top:586px;width:59px;height:18px;background:#F0F0F0;"></div>
<div class="b " style="left:245px;top:614px;width:618px;height:159px;background:#fff;"></div>
<div class="t lbl" style="top:615px;height:16px;line-height:16px;left:250px;font-weight:700;letter-spacing:-0.114px;">Point n° 1</div>
<div class="t lbl" style="top:615px;height:16px;line-height:16px;right:549px;margin-right:-0.061px;font-weight:700;letter-spacing:0.061px;">Point de l'élément</div>
<div class="b " style="left:245px;top:632px;width:618px;height:16px;background:#DEDEDE;"></div>
<div class="b " style="left:245px;top:648px;width:19px;height:125px;background:#E1E1E1;"></div>
<div class="b " style="left:264px;top:648px;width:599px;height:32px;background:#FAFAF5;"></div>
<div class="b " style="left:474px;top:648px;width:1px;height:32px;background:#DDDDDD;"></div>
<div class="b " style="left:559px;top:648px;width:1px;height:32px;background:#DDDDDD;"></div>
<div class="b " style="left:644px;top:648px;width:1px;height:32px;background:#DDDDDD;"></div>
<div class="t " style="top:630.8px;height:16px;line-height:16px;left:268px;letter-spacing:-0.166px;">Paramètres</div>
<div class="t " style="top:647px;height:16px;line-height:16px;left:288px;letter-spacing:0.334px;">Coordonnée</div>
<div class="t " style="top:647px;height:16px;line-height:16px;left:479px;">Y</div>
<div class="t " style="top:647px;height:16px;line-height:16px;right:766px;color:#6E6E6E;">-100.0</div>
<div class="t " style="top:647px;height:16px;line-height:16px;left:649.3px;font-weight:700;letter-spacing:-1.031px;">mm</div>
<div class="t " style="top:663px;height:16px;line-height:16px;left:288px;letter-spacing:0.334px;">Coordonnée</div>
<div class="t " style="top:663px;height:16px;line-height:16px;left:479px;">Z</div>
<div class="t " style="top:663px;height:16px;line-height:16px;right:766px;color:#6E6E6E;">-90.0</div>
<div class="t " style="top:663px;height:16px;line-height:16px;left:649.3px;font-weight:700;letter-spacing:-1.031px;">mm</div>
<div class="b " style="left:873px;top:128px;width:515px;height:645px;background:#fff;"></div>
<div class="t " style="top:130px;height:16px;line-height:16px;left:878px;letter-spacing:-0.001px;">2 - HE 200 A | EN 10365:2017 | ArcelorMittal (2018)</div>
<div class="b " style="left:878px;top:719px;width:505px;height:21px;background:#E8E8F3;"></div>
<div class="t " style="top:722px;height:16px;line-height:16px;left:883px;">--</div>
<div class="b " style="left:878px;top:748px;width:25px;height:21px;background:#CCE4F7;"></div>
<div class="b " style="left:906px;top:748px;width:25px;height:21px;background:#E6E6E6;"></div>
<div class="b " style="left:1042px;top:748px;width:37px;height:21px;background:#CCE4F7;"></div>
<div class="b " style="left:1082px;top:748px;width:25px;height:21px;background:#CCE4F7;"></div>
<div class="b " style="left:1110px;top:748px;width:25px;height:21px;background:#CCE4F7;"></div>
<div class="b " style="left:1138px;top:748px;width:25px;height:21px;background:#CCE4F7;"></div>
<div class="b " style="left:1166px;top:748px;width:25px;height:21px;background:#CCE4F7;"></div>
<div class="b " style="left:1194px;top:748px;width:25px;height:21px;background:#CCE4F7;"></div>
<div class="b " style="left:1222px;top:748px;width:25px;height:21px;background:#CCE4F7;"></div>
<div class="b " style="left:1250px;top:748px;width:37px;height:21px;background:#CCE4F7;"></div>
<div class="b " style="left:1290px;top:748px;width:25px;height:21px;background:#E6E6E6;"></div>
<div class="b " style="left:1318px;top:748px;width:37px;height:21px;background:#CCE4F7;"></div>
<div class="b " style="left:1358px;top:748px;width:25px;height:21px;background:#CCE4F7;"></div>
<div class="b " style="left:1042px;top:748px;width:21px;height:21px;background:transparent;border:1px solid #0F5CA8;border-right:none;"></div>
<div class="b " style="left:1110px;top:748px;width:25px;height:21px;background:transparent;border:1px solid #0F5CA8;"></div>
<div class="b " style="left:1222px;top:748px;width:25px;height:21px;background:transparent;border:1px solid #0F5CA8;"></div>
<div class="b " style="left:10px;top:799px;width:25px;height:21px;background:#CCE4F7;"></div>
<div class="b " style="left:45px;top:799px;width:25px;height:21px;background:#CCE4F7;"></div>
<div class="b " style="left:104px;top:799px;width:25px;height:21px;background:#CCE4F7;"></div>
<div class="b " style="left:139px;top:799px;width:25px;height:21px;background:#CCE4F7;"></div>
<div class="b " style="left:174px;top:799px;width:25px;height:21px;background:#CCE4F7;"></div>
<div class="b " style="left:80px;top:799px;width:21px;height:21px;background:#F5C400;border:1px solid #000;"></div>
<div class="b " style="left:1133px;top:800px;width:81px;height:21px;background:#E1E1E1;border:2px solid #0078D7;"></div>
<div class="b " style="left:1224px;top:800px;width:81px;height:21px;background:#E1E1E1;border:1px solid #ADADAD;"></div>
<div class="b " style="left:1315px;top:800px;width:81px;height:21px;background:#CCCCCC;border:1px solid #BFBFBF;"></div>
<div class="t " style="top:803px;height:16px;line-height:16px;left:1023.5px;width:300px;text-align:center;font-size:12px;">OK</div>
<div class="t " style="top:803px;height:16px;line-height:16px;left:1114.5px;width:300px;text-align:center;font-size:12px;">Annuler</div>
<div class="t " style="top:803px;height:16px;line-height:16px;left:1205.5px;width:300px;text-align:center;font-size:12px;color:#838383;">Appliquer</div>
<svg style="left:0;top:0" width="1407" height="832" viewBox="0 0 1407 832" font-family='"Liberation Sans", sans-serif'>
<defs><clipPath id="secclip"><path d="M927.80,233.86 L1330.20,233.86 L1330.20,253.98 L1171.76,253.98 A36.22,36.22 0 0 0 1135.54,290.20 L1135.54,559.80 A36.22,36.22 0 0 0 1171.76,596.02 L1330.20,596.02 L1330.20,616.14 L927.80,616.14 L927.80,596.02 L1086.24,596.02 A36.22,36.22 0 0 0 1122.46,559.80 L1122.46,290.20 A36.22,36.22 0 0 0 1086.24,253.98 L927.80,253.98 Z"/></clipPath></defs>
<path d="M927.80,233.86 L1330.20,233.86 L1330.20,253.98 L1171.76,253.98 A36.22,36.22 0 0 0 1135.54,290.20 L1135.54,559.80 A36.22,36.22 0 0 0 1171.76,596.02 L1330.20,596.02 L1330.20,616.14 L927.80,616.14 L927.80,596.02 L1086.24,596.02 A36.22,36.22 0 0 0 1122.46,559.80 L1122.46,290.20 A36.22,36.22 0 0 0 1086.24,253.98 L927.80,253.98 Z" fill="#6DB9E8"/>
<path d="M919.31,232 L533.31,618 M930.62,232 L544.62,618 M941.94,232 L555.94,618 M953.25,232 L567.25,618 M964.56,232 L578.56,618 M975.88,232 L589.88,618 M987.19,232 L601.19,618 M998.50,232 L612.50,618 M1009.82,232 L623.82,618 M1021.13,232 L635.13,618 M1032.45,232 L646.45,618 M1043.76,232 L657.76,618 M1055.07,232 L669.07,618 M1066.39,232 L680.39,618 M1077.70,232 L691.70,618 M1089.01,232 L703.01,618 M1100.33,232 L714.33,618 M1111.64,232 L725.64,618 M1122.96,232 L736.96,618 M1134.27,232 L748.27,618 M1145.58,232 L759.58,618 M1156.90,232 L770.90,618 M1168.21,232 L782.21,618 M1179.52,232 L793.52,618 M1190.84,232 L804.84,618 M1202.15,232 L816.15,618 M1213.47,232 L827.47,618 M1224.78,232 L838.78,618 M1236.09,232 L850.09,618 M1247.41,232 L861.41,618 M1258.72,232 L872.72,618 M1270.03,232 L884.03,618 M1281.35,232 L895.35,618 M1292.66,232 L906.66,618 M1303.97,232 L917.97,618 M1315.29,232 L929.29,618 M1326.60,232 L940.60,618 M1337.92,232 L951.92,618 M1349.23,232 L963.23,618 M1360.54,232 L974.54,618 M1371.86,232 L985.86,618 M1383.17,232 L997.17,618 M1394.48,232 L1008.48,618 M1405.80,232 L1019.80,618 M1417.11,232 L1031.11,618 M1428.43,232 L1042.43,618 M1439.74,232 L1053.74,618 M1451.05,232 L1065.05,618 M1462.37,232 L1076.37,618 M1473.68,232 L1087.68,618 M1484.99,232 L1098.99,618 M1496.31,232 L1110.31,618 M1507.62,232 L1121.62,618 M1518.94,232 L1132.94,618 M1530.25,232 L1144.25,618 M1541.56,232 L1155.56,618 M1552.88,232 L1166.88,618 M1564.19,232 L1178.19,618 M1575.50,232 L1189.50,618 M1586.82,232 L1200.82,618 M1598.13,232 L1212.13,618 M1609.45,232 L1223.45,618 M1620.76,232 L1234.76,618 M1632.07,232 L1246.07,618 M1643.39,232 L1257.39,618 M1654.70,232 L1268.70,618 M1666.01,232 L1280.01,618 M1677.33,232 L1291.33,618 M1688.64,232 L1302.64,618 M1699.95,232 L1313.95,618 M1711.27,232 L1325.27,618 M1722.58,232 L1336.58,618 " stroke="#fff" stroke-width="1.2" fill="none" clip-path="url(#secclip)" opacity="0.97"/>
<path d="M927.80,233.86 L1330.20,233.86 L1330.20,253.98 L1171.76,253.98 A36.22,36.22 0 0 0 1135.54,290.20 L1135.54,559.80 A36.22,36.22 0 0 0 1171.76,596.02 L1330.20,596.02 L1330.20,616.14 L927.80,616.14 L927.80,596.02 L1086.24,596.02 A36.22,36.22 0 0 0 1122.46,559.80 L1122.46,290.20 A36.22,36.22 0 0 0 1086.24,253.98 L927.80,253.98 Z" fill="none" stroke="#686E74" stroke-width="1.1" stroke-linejoin="miter"/>
<path d="M1129,425.35 H1350" stroke="#FF00FF" stroke-width="1.2" stroke-dasharray="6 2.9 1.3 2.8" fill="none"/>
<path d="M1350.2,422 L1358.3,425.3 L1350.2,428.6 Z" fill="#FF00FF"/>
<path d="M1129.4,425 V438" stroke="#FF00FF" stroke-width="1.2" stroke-dasharray="6 2.9 1.3 2.8" fill="none"/>
<path d="M1129.4,438 V620" stroke="#FF00FF" stroke-width="1.2" stroke-dasharray="9.5 1.3 0.9 1.3" fill="none"/>
<path d="M1129.4,620 V637" stroke="#FF00FF" stroke-width="1.2" stroke-dasharray="6 2.9 1.3 2.8" fill="none"/>
<path d="M1125.6,636.2 L1129.1,644.3 L1132.6,636.2 Z" fill="#FF00FF"/>
<text x="1354" y="437.4" font-size="11" fill="#FF00FF">y</text>
<text x="1116.8" y="648" font-size="11" fill="#FF00FF">z</text>
<circle cx="1129" cy="425" r="2.6" fill="#FF0000"/>
<text x="1131.0" y="240.6" font-size="9.9" fill="#1FA79F" text-anchor="start" letter-spacing="-0.75">2</text>
<text x="1331.2" y="241.0" font-size="9.9" fill="#1FA79F" text-anchor="start" letter-spacing="-0.75">3</text>
<text x="1083.7" y="250.6" font-size="9.9" fill="#1FA79F" text-anchor="end" letter-spacing="-0.75">10</text>
<text x="1174.0" y="250.6" font-size="9.9" fill="#1FA79F" text-anchor="start" letter-spacing="-0.75">11</text>
<text x="1083.7" y="286.6" font-size="9.9" fill="#1FA79F" text-anchor="end" letter-spacing="-0.75">23</text>
<text x="1119.7" y="286.6" font-size="9.9" fill="#1FA79F" text-anchor="end" letter-spacing="-0.75">13</text>
<text x="1138.0" y="286.6" font-size="9.9" fill="#1FA79F" text-anchor="start" letter-spacing="-0.75">14</text>
<text x="1174.0" y="286.6" font-size="9.9" fill="#1FA79F" text-anchor="start" letter-spacing="-0.75">24</text>
<text x="1083.7" y="571.0" font-size="9.9" fill="#1FA79F" text-anchor="end" letter-spacing="-0.75">25</text>
<text x="1119.7" y="571.0" font-size="9.9" fill="#1FA79F" text-anchor="end" letter-spacing="-0.75">15</text>
<text x="1138.0" y="571.0" font-size="9.9" fill="#1FA79F" text-anchor="start" letter-spacing="-0.75">16</text>
<text x="1174.0" y="571.0" font-size="9.9" fill="#1FA79F" text-anchor="start" letter-spacing="-0.75">26</text>
<text x="1083.7" y="607.0" font-size="9.9" fill="#1FA79F" text-anchor="end" letter-spacing="-0.75">18</text>
<text x="1174.0" y="607.0" font-size="9.9" fill="#1FA79F" text-anchor="start" letter-spacing="-0.75">19</text>
<text x="1130.0" y="616.5" font-size="9.9" fill="#1FA79F" text-anchor="start" letter-spacing="-0.75">5</text>
<text x="925.6" y="617.6" font-size="9.9" fill="#1FA79F" text-anchor="end" letter-spacing="-0.75">4</text>
<text x="1330.6" y="617.3" font-size="9.9" fill="#1FA79F" text-anchor="start" letter-spacing="-0.75">6</text>
<text x="926" y="241.5" font-size="9.9" fill="#FF0000" text-anchor="end">1</text>
<rect x="926" y="232" width="4" height="4" fill="#33C733"/>
<rect x="1328" y="232" width="4" height="4" fill="#33C733"/>
<rect x="926" y="252" width="4" height="4" fill="#33C733"/>
<rect x="1084" y="252" width="4" height="4" fill="#33C733"/>
<rect x="1170" y="252" width="4" height="4" fill="#33C733"/>
<rect x="1328" y="252" width="4" height="4" fill="#33C733"/>
<rect x="1120" y="288" width="4" height="4" fill="#33C733"/>
<rect x="1134" y="288" width="4" height="4" fill="#33C733"/>
<rect x="1120" y="558" width="4" height="4" fill="#33C733"/>
<rect x="1134" y="558" width="4" height="4" fill="#33C733"/>
<rect x="926" y="594" width="4" height="4" fill="#33C733"/>
<rect x="1084" y="594" width="4" height="4" fill="#33C733"/>
<rect x="1170" y="594" width="4" height="4" fill="#33C733"/>
<rect x="1328" y="594" width="4" height="4" fill="#33C733"/>
<rect x="926" y="614" width="4" height="4" fill="#33C733"/>
<rect x="1328" y="614" width="4" height="4" fill="#33C733"/>
<rect x="1084" y="288" width="4" height="4" fill="#33C733"/>
<rect x="1170" y="288" width="4" height="4" fill="#33C733"/>
<rect x="1084" y="558" width="4" height="4" fill="#33C733"/>
<rect x="1170" y="558" width="4" height="4" fill="#33C733"/>
<rect x="925" y="241" width="6" height="6" fill="#FF0000"/>
<rect x="1127" y="242" width="4" height="4" fill="#FF00FF"/>
<rect x="1328" y="242" width="4" height="4" fill="#FF00FF"/>
<rect x="926" y="604" width="4" height="4" fill="#FF00FF"/>
<rect x="1127" y="604" width="4" height="4" fill="#FF00FF"/>
<rect x="1328" y="604" width="4" height="4" fill="#FF00FF"/>
<defs>
<linearGradient id="gWin" x1="0" y1="0" x2="1" y2="1"><stop offset="0" stop-color="#FFFFFF"/><stop offset="1" stop-color="#C9C9C9"/></linearGradient>
<linearGradient id="gMag" x1="0" y1="0" x2="1" y2="1"><stop offset="0.15" stop-color="#FF00FF"/><stop offset="0.9" stop-color="#8A00FF"/></linearGradient>
<linearGradient id="gBlu" x1="0" y1="0" x2="1" y2="1"><stop offset="0.15" stop-color="#4DB8EA"/><stop offset="0.9" stop-color="#04608A"/></linearGradient>
<linearGradient id="gTrap" x1="0" y1="0" x2="1" y2="1"><stop offset="0" stop-color="#B8D8F4"/><stop offset="1" stop-color="#5C82B4"/></linearGradient>
<linearGradient id="gGrid" x1="0" y1="0" x2="1" y2="1"><stop offset="0" stop-color="#CDEAFF"/><stop offset="1" stop-color="#5675A6"/></linearGradient>
<linearGradient id="gMesh" x1="0" y1="0" x2="1" y2="1"><stop offset="0" stop-color="#8FC0F0"/><stop offset="1" stop-color="#3A6FB8"/></linearGradient>
</defs>
<path d="M9.2,12.8 C12,11.6 15,9.4 17.6,7 C20.4,8.2 22.8,10.2 24.5,12.6 C23.4,14.6 21.8,16.2 20,17.4 C17.4,14.6 13.6,13 9.2,12.8 Z" fill="#6F7F98" />
<path d="M11.6,12.2 C13.8,11.2 15.8,9.8 17.7,8.1 C19.8,9.2 21.7,10.7 23.2,12.6 C22.3,13.9 21.2,15 19.9,15.9 C17.7,14 14.9,12.7 11.6,12.2 Z" fill="url(#gMesh)" />
<path d="M13.7,11.3 C16.6,12 19.3,13.4 21.4,15 M15.7,10 C18.4,10.8 20.7,12.2 22.5,13.8 M14.6,12.9 C16.6,11.8 18.4,10.4 19.9,9 M17.2,14 C18.9,12.9 20.4,11.6 21.6,10.4" fill="none" stroke="#55657F" stroke-width="0.55" />
<circle cx="14.6" cy="18.3" r="3.0" fill="none" stroke="#B8941A" stroke-width="3.7"/>
<path d="M11.5,18.3 C11.5,15 13.4,12.9 16.8,12.3" fill="none" stroke="#B8941A" stroke-width="3.3" />
<circle cx="14.6" cy="18.3" r="3.0" fill="none" stroke="#F8D230" stroke-width="3.0"/>
<path d="M11.6,18.5 C11.6,15.2 13.5,13.1 16.8,12.5" fill="none" stroke="#F8D230" stroke-width="2.6" />
<path d="M1287,15.5 H1297" fill="none" stroke="#5AA5E6" stroke-width="1" />
<rect x="1332.5" y="10.5" width="9" height="9" fill="none" stroke="#fff" stroke-width="1" />
<path d="M1378,10 L1388,20 M1388,10 L1378,20" fill="none" stroke="#fff" stroke-width="1.1" />
<circle cx="33" cy="67.7" r="5.1" fill="#A0A0A0"/>
<path d="M29,80.5 H38 M29,90.5 H38 M33.5,80.5 V90.5" fill="none" stroke="#1A1A9C" stroke-width="1" />
<path d="M29,98.5 H38 M29,108.5 H38 M33.5,98.5 V108.5" fill="none" stroke="#1A1A9C" stroke-width="1" />
<rect x="30.5" y="117.5" width="5" height="9" fill="#A0A0A0" stroke="#C4C4C4" stroke-width="1" />
<rect x="24.5" y="763.5" width="10" height="10" fill="url(#gWin)" stroke="#555" stroke-width="1" />
<rect x="25" y="764" width="9" height="2" fill="#3366E8" />
<rect x="25" y="764" width="3" height="2" fill="#E8E8F0" />
<polygon points="23.40,757.90 24.24,760.57 26.72,759.28 25.43,761.76 28.10,762.60 25.43,763.44 26.72,765.92 24.24,764.63 23.40,767.30 22.56,764.63 20.08,765.92 21.37,763.44 18.70,762.60 21.37,761.76 20.08,759.28 22.56,760.57" fill="#FFEE00" stroke="#C8B400" stroke-width="0.4"/>
<rect x="47.5" y="758.5" width="11" height="10" fill="url(#gWin)" stroke="#555" stroke-width="1" />
<rect x="48" y="759" width="10" height="2" fill="#3366E8" />
<rect x="48" y="759" width="3" height="2" fill="#E8E8F0" />
<rect x="51.5" y="763.5" width="11" height="10" fill="url(#gWin)" stroke="#555" stroke-width="1" />
<rect x="52" y="764" width="10" height="2" fill="#3366E8" />
<rect x="52" y="764" width="3" height="2" fill="#E8E8F0" />
<rect x="82" y="759.5" width="6" height="5.5" fill="#D8D8D8" stroke="#B0B0B0" stroke-width="0.6" />
<path d="M82.6,761.6 L84.6,764 L88.3,758.6" fill="none" stroke="#222" stroke-width="1" />
<rect x="82" y="767.5" width="6" height="5.5" fill="#D8D8D8" stroke="#B0B0B0" stroke-width="0.6" />
<path d="M82.6,769.6 L84.6,772 L88.3,766.6" fill="none" stroke="#222" stroke-width="1" />
<path d="M89.3,766.2 C91,766 92,767.5 92.8,770.2 C94.5,766 96,763.5 98.2,761.5 C96,762.5 94,765 92.6,767.6 C91.8,766.6 90.6,765.9 89.3,766.2 Z" fill="#1FA84A" stroke="#1FA84A" stroke-width="1.5" stroke-linejoin="round"/>
<rect x="110" y="759.5" width="6" height="5.5" fill="#D8D8D8" stroke="#B0B0B0" stroke-width="0.6" />
<path d="M110.6,761.6 L112.6,764 L116.3,758.6" fill="none" stroke="#222" stroke-width="1" />
<rect x="110.5" y="767.5" width="5" height="5" fill="#E4EEF8" stroke="#A8A8A8" stroke-width="0.8" />
<path d="M118,764 C119,761.5 123,761 125.5,763" fill="none" stroke="#2FA84F" stroke-width="1.5" />
<path d="M117,763.2 L120.6,762.8 L118.4,766 Z" fill="#2FA84F" />
<path d="M125.8,766.4 C124.5,768.8 120.6,769.2 118.2,767.4" fill="none" stroke="#2FA84F" stroke-width="1.5" />
<path d="M126.8,767.2 L123.2,767.6 L125.4,764.4 Z" fill="#2FA84F" />
<path d="M203.8,761.8 L212.6,770.6 M212.6,761.8 L203.8,770.6" fill="none" stroke="#F01010" stroke-width="3.1" stroke-linecap="round"/>
<path d="M813.5,67.5 H810.5 V77.5 H813.5 M824.5,67.5 H821.5 M816.5,77.5 H824.5" fill="none" stroke="#9A9A9A" stroke-width="1" />
<path d="M819.2,65 L821.6,66.4 L816.2,76 L813.8,77.4 L813.9,74.6 Z" fill="#A8A8A8" />
<path d="M837.5,66.5 V77.5 H844.5 L845.3,78.3 L846.1,77.5 H852.5 V66.5" fill="none" stroke="#666" stroke-width="1" />
<path d="M838.6,65.6 C840.8,65 843.2,65.2 845,66.4 V77 C843.2,76 840.8,75.9 838.6,76.5 Z" fill="#666" />
<path d="M851.8,65.6 C849.6,65 847.2,65.2 845.6,66.4 V77 C847.2,76 849.6,75.9 851.8,76.5 Z" fill="#666" />
<path d="M1374.5,64.5 L1379.5,69.5 M1379.5,64.5 L1374.5,69.5" fill="none" stroke="#8A8A8A" stroke-width="0.9" />
<path d="M1377.5,67.5 L1377.5,77.5 L1380,75.3 L1381.6,78.8 L1383,78.2 L1381.4,74.8 L1384.6,74.6 Z" fill="#F4F4F4" stroke="#9A9A9A" stroke-width="0.8" />
<path d="M651.5,172.5 H655.5 V175.5 H658.5 V179.5 H655.5 V182.5 H651.5 V179.5 H648.5 V175.5 H651.5 Z" fill="url(#gMag)" stroke="#A400C4" stroke-width="1" />
<path d="M651.5,188.5 H655.5 V191.5 H658.5 V195.5 H655.5 V198.5 H651.5 V195.5 H648.5 V191.5 H651.5 Z" fill="url(#gMag)" stroke="#A400C4" stroke-width="1" />
<path d="M651.5,204.5 H655.5 V207.5 H658.5 V211.5 H655.5 V214.5 H651.5 V211.5 H648.5 V207.5 H651.5 Z" fill="url(#gMag)" stroke="#A400C4" stroke-width="1" />
<path d="M651.5,220.5 H655.5 V223.5 H658.5 V227.5 H655.5 V230.5 H651.5 V227.5 H648.5 V223.5 H651.5 Z" fill="url(#gMag)" stroke="#A400C4" stroke-width="1" />
<path d="M651.5,236.5 H655.5 V239.5 H658.5 V243.5 H655.5 V246.5 H651.5 V243.5 H648.5 V239.5 H651.5 Z" fill="url(#gMag)" stroke="#A400C4" stroke-width="1" />
<path d="M651.5,252.5 H655.5 V255.5 H658.5 V259.5 H655.5 V262.5 H651.5 V259.5 H648.5 V255.5 H651.5 Z" fill="url(#gMag)" stroke="#A400C4" stroke-width="1" />
<path d="M651.4,528.6 V527.2 A2.1,2.4 0 0 1 655.6,527.2 V528.6" fill="none" stroke="#666" stroke-width="1.2" />
<rect x="649" y="528.2" width="9" height="6.6" rx="1" fill="#666"/>
<circle cx="653.5" cy="530.6" r="1.15" fill="#fff"/>
<path d="M653.5,530.6 V533.6" fill="none" stroke="#fff" stroke-width="1" />
<path d="M668.5,524.5 H672.5 V527.5 H675.5 V531.5 H672.5 V534.5 H668.5 V531.5 H665.5 V527.5 H668.5 Z" fill="url(#gBlu)" stroke="#0050A0" stroke-width="1" />
<path d="M651.4,544.6 V543.2 A2.1,2.4 0 0 1 655.6,543.2 V544.6" fill="none" stroke="#666" stroke-width="1.2" />
<rect x="649" y="544.2" width="9" height="6.6" rx="1" fill="#666"/>
<circle cx="653.5" cy="546.6" r="1.15" fill="#fff"/>
<path d="M653.5,546.6 V549.6" fill="none" stroke="#fff" stroke-width="1" />
<path d="M668.5,540.5 H672.5 V543.5 H675.5 V547.5 H672.5 V550.5 H668.5 V547.5 H665.5 V543.5 H668.5 Z" fill="url(#gBlu)" stroke="#0050A0" stroke-width="1" />
<path d="M651.4,560.6 V559.2 A2.1,2.4 0 0 1 655.6,559.2 V560.6" fill="none" stroke="#666" stroke-width="1.2" />
<rect x="649" y="560.2" width="9" height="6.6" rx="1" fill="#666"/>
<circle cx="653.5" cy="562.6" r="1.15" fill="#fff"/>
<path d="M653.5,562.6 V565.6" fill="none" stroke="#fff" stroke-width="1" />
<path d="M668.5,556.5 H672.5 V559.5 H675.5 V563.5 H672.5 V566.5 H668.5 V563.5 H665.5 V559.5 H668.5 Z" fill="url(#gBlu)" stroke="#0050A0" stroke-width="1" />
<path d="M651.4,576.6 V575.2 A2.1,2.4 0 0 1 655.6,575.2 V576.6" fill="none" stroke="#666" stroke-width="1.2" />
<rect x="649" y="576.2" width="9" height="6.6" rx="1" fill="#666"/>
<circle cx="653.5" cy="578.6" r="1.15" fill="#fff"/>
<path d="M653.5,578.6 V581.6" fill="none" stroke="#fff" stroke-width="1" />
<path d="M668.5,572.5 H672.5 V575.5 H675.5 V579.5 H672.5 V582.5 H668.5 V579.5 H665.5 V575.5 H668.5 Z" fill="url(#gBlu)" stroke="#0050A0" stroke-width="1" />
<rect x="250.5" y="636.5" width="8" height="8" fill="#fff" stroke="#707070" stroke-width="1" />
<path d="M252,640.5 H257" fill="none" stroke="#404040" stroke-width="1" />
<path d="M260,640.5 H265" fill="none" stroke="#A0A0A0" stroke-width="1" stroke-dasharray="1 1"/>
<path d="M274.5,648 V672" fill="none" stroke="#A0A0A0" stroke-width="1" stroke-dasharray="1 1"/>
<path d="M275,656.5 H285 M275,672.5 H285" fill="none" stroke="#A0A0A0" stroke-width="1" stroke-dasharray="1 1"/>
<path d="M1368.5,726.5 L1373,731 L1377.5,726.5" fill="none" stroke="#444" stroke-width="1" />
<rect x="882.5" y="750.5" width="7" height="6" fill="#fff" stroke="#3A62E0" stroke-width="1.2" />
<path d="M884.5,752.5 V755.5 H888 V754 H886 V752.5 Z" fill="#3A62E0" />
<path d="M891.6,751.6 C894.6,752 895.6,754 895.2,756.4" fill="none" stroke="#555" stroke-width="1.1" />
<path d="M893,755.2 L895.2,758 L897.6,755.2 Z" fill="#555" />
<path d="M888.2,763.4 C885.4,763.2 884,761.6 884,759.4" fill="none" stroke="#555" stroke-width="1.1" />
<path d="M881.8,760.4 L884,757.6 L886.4,760.4 Z" fill="#555" />
<path d="M889.2,758 L892,756.6 V766.4 L889.2,764.2 Z" fill="#E4F0FC" stroke="#9CBCE4" stroke-width="0.5" />
<path d="M892,756.6 H896 V761 H892 Z" fill="#3E6CB8" />
<path d="M892,757.6 H896 V759 H892 Z" fill="#6C98DC" />
<path d="M892,761.4 H898.2 V766.2 H892 Z" fill="#3E6CB8" />
<path d="M892,762.6 H898.2 V764.2 H892 Z" fill="#6C98DC" />
<path d="M915,752.6 L919.8,750.4 L921.8,752.6 M915,752.6 C916.6,756 916.6,760 915,763.6 M921.8,752.6 C921,756 921,760 921.8,763.6 M915,763.6 L919.8,766 L921.8,763.6" fill="none" stroke="#9A9A9A" stroke-width="0.8" />
<path d="M1046.5,753.6 H1053.4 L1057.4,763.5 H1046.5 Z" fill="url(#gTrap)" stroke="#4A5E88" stroke-width="0.9" />
<circle cx="1046.5" cy="753.6" r="1.6" fill="#33DD33"/>
<circle cx="1053.4" cy="753.6" r="1.6" fill="#33DD33"/>
<circle cx="1057.4" cy="763.5" r="1.6" fill="#33DD33"/>
<circle cx="1046.5" cy="763.5" r="1.6" fill="#33DD33"/>
<path d="M1067.9,756.1 H1074.9 L1071.4,760.2 Z" fill="#000" />
<path d="M1087.4,754.6 V762 M1100.6,754.6 V762 M1087.4,756.7 H1100.6" fill="none" stroke="#000" stroke-width="1" />
<path d="M1086.2,756.7 L1088.8,755.2 V758.2 Z M1101.8,756.7 L1099.2,755.2 V758.2 Z" fill="#000" />
<path d="M1087,764.1 H1100.8" fill="none" stroke="#1F2060" stroke-width="1.6" />
<text x="1094" y="754.6" font-size="4.6" font-weight="700" text-anchor="middle" fill="#222">100</text>
<path d="M1124.6,751.7 H1118.9 V763.7 H1124.6" fill="none" stroke="#1F2060" stroke-width="1.1" />
<circle cx="1121.6" cy="757.4" r="1.2" fill="#E0508C"/>
<path d="M1121.6,757.4 H1128 M1121.6,757.4 V764.2" fill="none" stroke="#E0508C" stroke-width="0.9" />
<path d="M1129.6,757.4 L1127.4,756.2 V758.6 Z M1121.6,765.6 L1120.4,763.4 H1122.8 Z" fill="#E0508C" />
<text x="1126.8" y="755.2" font-size="5.5" fill="#E0508C">y</text>
<text x="1123.2" y="766.6" font-size="5" fill="#E0508C">z</text>
<path d="M1157,751.7 H1151.1 V763.7 H1157" fill="none" stroke="#1F2060" stroke-width="1.1" />
<circle cx="1145.6" cy="757.4" r="1.3" fill="#E0508C"/>
<text transform="translate(1141.8,765.9) scale(0.66,1)" font-size="10.4" fill="#E0508C">sc</text>
<path d="M1171.3,751.5 H1183.5 M1171.3,763.5 H1183.5 M1177.4,751.5 V763.5" fill="none" stroke="#1F2060" stroke-width="1.1" />
<path d="M1169.9999999999998,751.5 L1171.3,750.2 L1172.6000000000001,751.5 L1171.3,752.8 Z" fill="#FF1010" />
<path d="M1176.1,751.5 L1177.4,750.2 L1178.7000000000003,751.5 L1177.4,752.8 Z" fill="#FF1010" />
<path d="M1182.1999999999998,751.5 L1183.5,750.2 L1184.8000000000002,751.5 L1183.5,752.8 Z" fill="#FF1010" />
<path d="M1176.1,757.5 L1177.4,756.2 L1178.7000000000003,757.5 L1177.4,758.8 Z" fill="#FF1010" />
<path d="M1169.9999999999998,763.5 L1171.3,762.2 L1172.6000000000001,763.5 L1171.3,764.8 Z" fill="#FF1010" />
<path d="M1176.1,763.5 L1177.4,762.2 L1178.7000000000003,763.5 L1177.4,764.8 Z" fill="#FF1010" />
<path d="M1182.1999999999998,763.5 L1183.5,762.2 L1184.8000000000002,763.5 L1183.5,764.8 Z" fill="#FF1010" />
<path d="M1199,751.5 H1204 M1206.4,751.5 H1211.8 M1199,763.5 H1204 M1206.4,763.5 H1211.8 M1205.4,753.1 V761.8" fill="none" stroke="#1F2060" stroke-width="1.1" />
<text x="1227.2" y="758" font-size="5.6" font-weight="700" fill="#FF1010" text-anchor="middle">1</text>
<text x="1233.6" y="758" font-size="5.6" font-weight="700" fill="#FF1010" text-anchor="middle">2</text>
<text x="1240.6" y="758" font-size="5.6" font-weight="700" fill="#FF1010" text-anchor="middle">3</text>
<path d="M1227.5,761.6 H1240.5" fill="none" stroke="#1F2060" stroke-width="1" />
<path d="M1226.3,761.6 L1227.5,760.4000000000001 L1228.7,761.6 L1227.5,762.8 Z" fill="#FF1010" />
<path d="M1232.8,761.6 L1234,760.4000000000001 L1235.2,761.6 L1234,762.8 Z" fill="#FF1010" />
<path d="M1239.3,761.6 L1240.5,760.4000000000001 L1241.7,761.6 L1240.5,762.8 Z" fill="#FF1010" />
<rect x="1253" y="752.2" width="13" height="12.7" fill="url(#gGrid)" />
<path d="M1257.3,752.2 V764.9 M1261.7,752.2 V764.9 M1253,756.4 H1266 M1253,760.7 H1266" fill="none" stroke="#50607C" stroke-width="0.6" />
<path d="M1253,764.6 H1266 M1265.7,752.2 V764.9" fill="none" stroke="#50607C" stroke-width="0.6" />
<path d="M1276.0,756.1 H1283.0 L1279.5,760.2 Z" fill="#000" />
<rect x="1301.1" y="751.1" width="2.7" height="1.8" fill="#5C5C5C" />
<path d="M1298,752 H1300 M1305,752 H1307" fill="none" stroke="#909090" stroke-width="0.7" />
<rect x="1301.1" y="754.1" width="2.7" height="1.8" fill="#D0D0D0" />
<path d="M1298,755 H1300 M1305,755 H1307" fill="none" stroke="#909090" stroke-width="0.7" />
<rect x="1301.1" y="757.1" width="2.7" height="1.8" fill="#B4B4B4" />
<path d="M1298,758 H1300 M1305,758 H1307" fill="none" stroke="#909090" stroke-width="0.7" />
<rect x="1301.1" y="760.1" width="2.7" height="1.8" fill="#A4A4A4" />
<path d="M1298,761 H1300 M1305,761 H1307" fill="none" stroke="#909090" stroke-width="0.7" />
<rect x="1301.1" y="763.1" width="2.7" height="1.8" fill="#4C4C4C" />
<path d="M1298,764 H1300 M1305,764 H1307" fill="none" stroke="#909090" stroke-width="0.7" />
<rect x="1323" y="750.1" width="10" height="3.5" fill="#666" />
<rect x="1320" y="755" width="16" height="7.4" rx="1.2" fill="#666"/>
<rect x="1332.6" y="756.6" width="2" height="1" fill="#fff" />
<rect x="1323.4" y="759.6" width="9.2" height="6" fill="#fff" stroke="#666" stroke-width="0.9" />
<path d="M1325,761.6 H1331 M1325,763.6 H1331" fill="none" stroke="#666" stroke-width="0.8" />
<path d="M1344.0,756.1 H1351.0 L1347.5,760.2 Z" fill="#000" />
<circle cx="1367.4" cy="756.9" r="4.1" fill="none" stroke="#666" stroke-width="1.5"/>
<path d="M1370.6,759.8 L1376.2,764.4" fill="none" stroke="#666" stroke-width="1.9" />
<path d="M1370.4,751 L1377.4,757.8 M1377.4,751 L1370.4,757.8" fill="none" stroke="#F01010" stroke-width="2" />
<circle cx="22.8" cy="808.3" r="6.4" fill="#5A5A5A"/>
<path d="M18.6,812.6 L15.2,815.6 L21.6,814.4 Z" fill="#5A5A5A" />
<text x="22.9" y="812.4" font-size="11" font-weight="700" fill="#fff" text-anchor="middle">?</text>
<rect x="49.2" y="801.2" width="15.6" height="4.4" fill="#7FD36B" />
<path d="M52,801.2 V803.4 M55,801.2 V803.4 M58,801.2 V803.4 M61,801.2 V803.4" fill="none" stroke="#4FA83E" stroke-width="0.6" />
<text x="48.7" y="813.9" font-size="9.3" font-weight="700" fill="#000" letter-spacing="-0.5">0,</text>
<text x="55.6" y="813.9" font-size="9.3" fill="#3C6AE0" letter-spacing="-0.5">00</text>
<path d="M56,815.4 H65" fill="none" stroke="#3C6AE0" stroke-width="0.8" />
<rect x="108" y="801" width="6.4" height="6.4" fill="#808080" />
<rect x="108.6" y="801.6" width="2.4" height="2.4" fill="#FF1010" />
<rect x="111.6" y="801.6" width="2.4" height="2.4" fill="#FFEE00" />
<rect x="108.6" y="804.6" width="2.4" height="2.4" fill="#10DD10" />
<rect x="111.6" y="804.6" width="2.4" height="2.4" fill="#4060FF" />
<text x="108" y="814.8" font-size="9.4" fill="#000">A</text>
<path d="M108,816.2 H116" fill="none" stroke="#000" stroke-width="1.1" stroke-dasharray="1.4 1 1.4 1 3 0"/>
<rect x="115.5" y="806.5" width="8.5" height="6" fill="#F0F0F0" stroke="#707070" stroke-width="0.9" />
<rect x="116" y="806.5" width="8" height="1.6" fill="#203890" />
<rect x="143.5" y="802.5" width="15" height="11" fill="#CFE2F2" stroke="#858585" stroke-width="1" />
<path d="M145,806.8 C148,803.8 152.5,803.2 156.8,805.8 L154,808.2 L151.4,811.8 C149.6,808.8 147.4,807.4 145,806.8 Z" fill="#4A80C8" />
<path d="M146.6,806.2 C149.4,805 152.6,805.2 155,807 M150,804.4 L152.6,810.2" fill="none" stroke="#9CC4EC" stroke-width="0.5" />
<path d="M151,814 V816 M147,816.4 H155" fill="none" stroke="#707070" stroke-width="1.2" />
<text x="177.6" y="814.2" font-size="13" font-style="italic" font-family="'Liberation Serif', serif" fill="#111">f</text>
<text x="184.6" y="815.2" font-size="12.5" font-style="italic" font-family="'Liberation Serif', serif" fill="#111" stroke="#111" stroke-width="0.25">x</text>
<ellipse cx="188.9" cy="804.2" rx="4.2" ry="2.7" fill="#fff" stroke="#303090" stroke-width="0.9"/>
<circle cx="188.9" cy="804.2" r="1.7" fill="#303090"/>
<rect x="1402.3" y="822.3" width="1.6" height="1.6" fill="#B0B0B0" />
<rect x="1399.3" y="825.3" width="1.6" height="1.6" fill="#B0B0B0" />
<rect x="1402.3" y="825.3" width="1.6" height="1.6" fill="#B0B0B0" />
<rect x="1396.3" y="828.3" width="1.6" height="1.6" fill="#B0B0B0" />
<rect x="1399.3" y="828.3" width="1.6" height="1.6" fill="#B0B0B0" />
<rect x="1402.3" y="828.3" width="1.6" height="1.6" fill="#B0B0B0" />
</svg>
</body></html>
